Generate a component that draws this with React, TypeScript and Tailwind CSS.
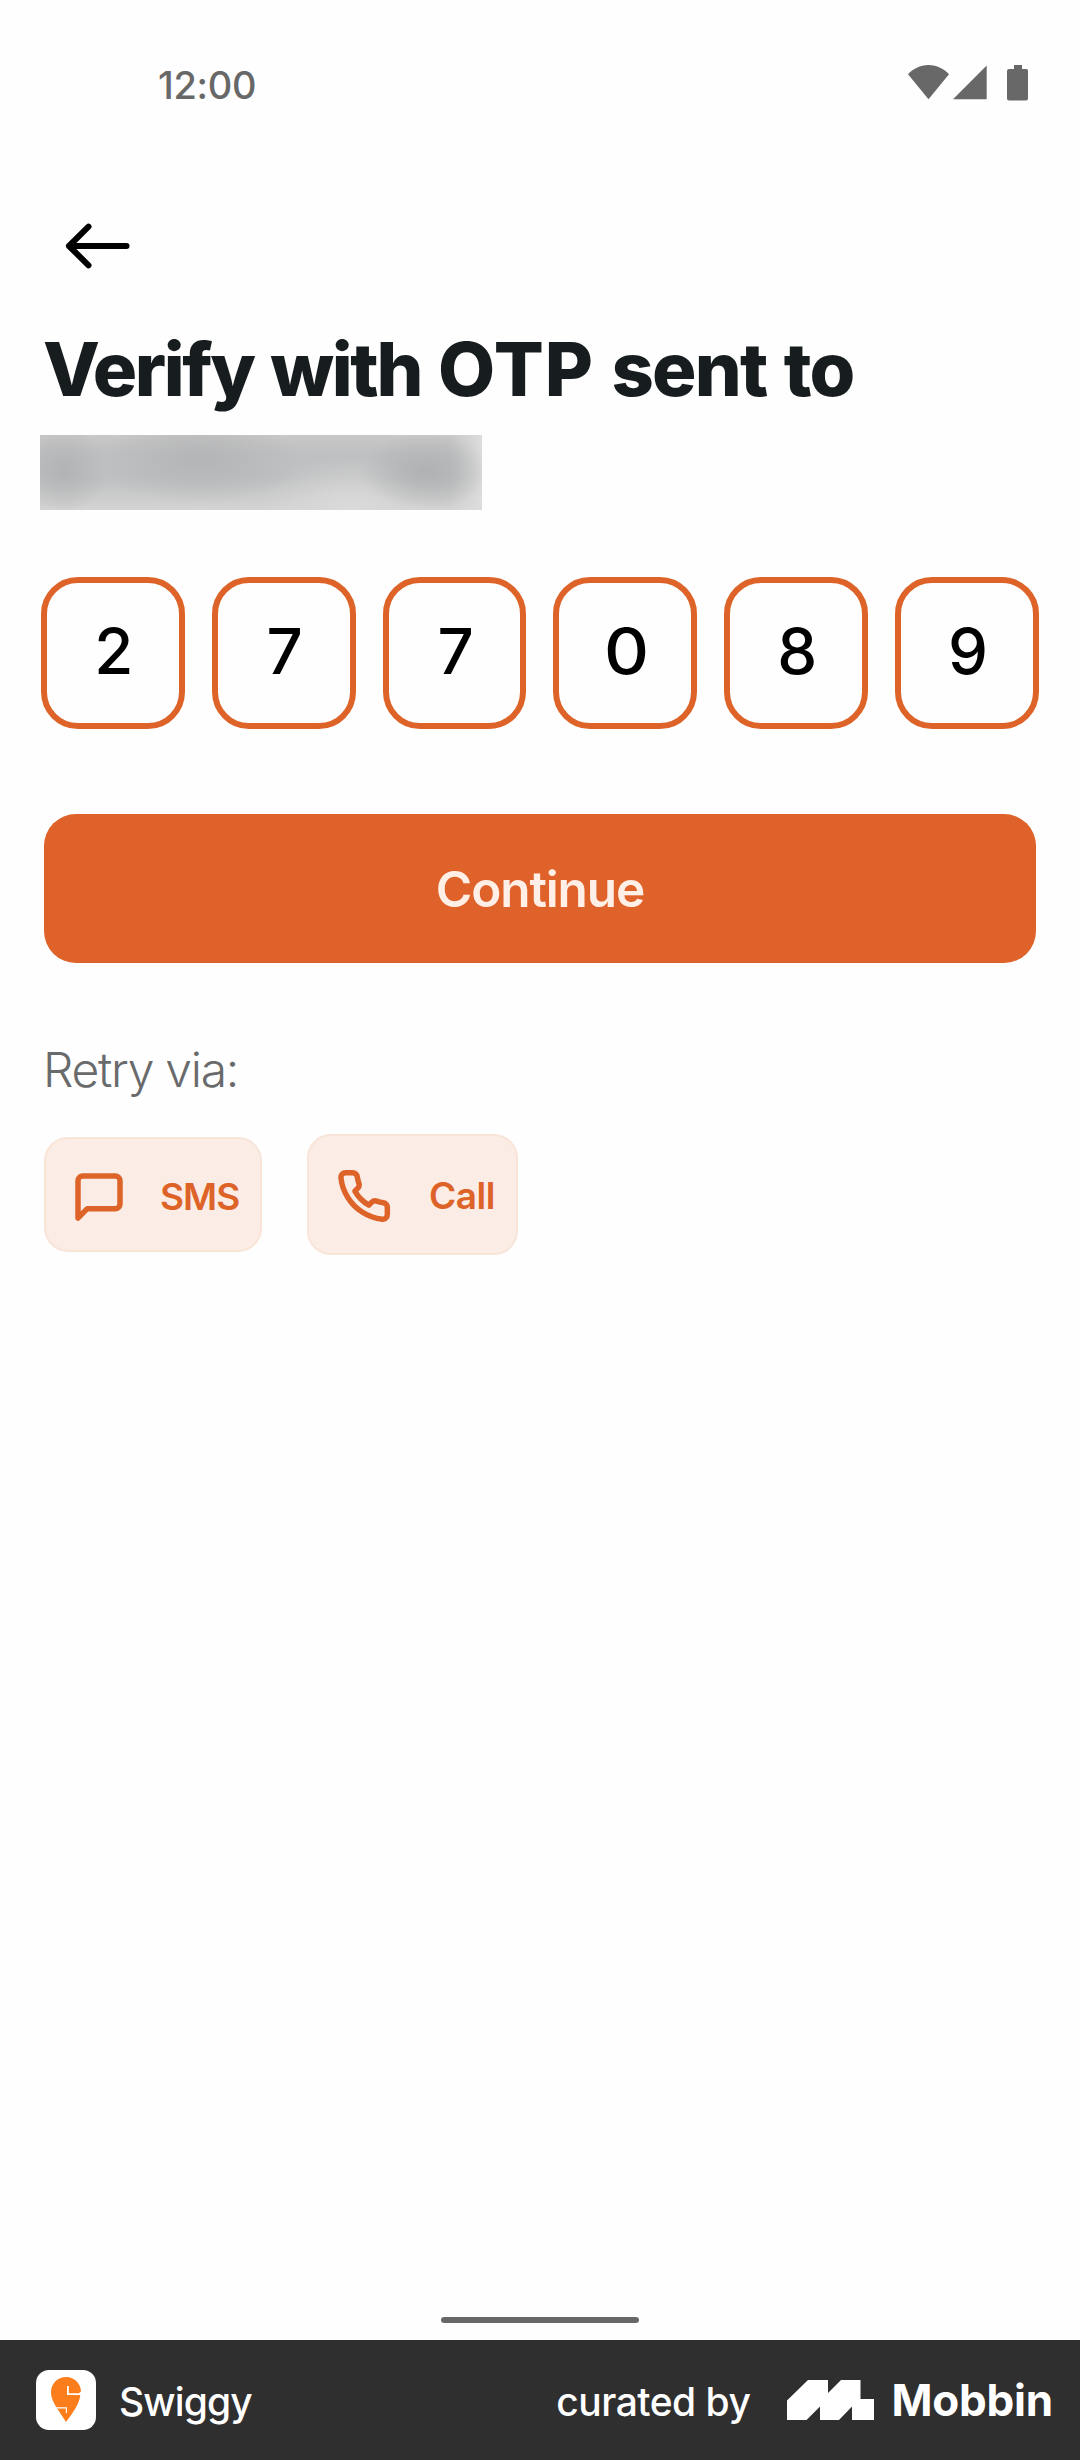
import React from "react";

const digits = ["2", "7", "7", "0", "8", "9"];

function StatusIcons() {
  return (
    <svg className="mb-[3px] h-[36px] w-[121px]" viewBox="908 65 121 36" fill="#686868">
      <path d="M908 74.2C913 69 920 65 928.5 65S944 69 949 74.2L928.5 99.3Z" />
      <path d="M953 99.3L986.7 65.4V99.3Z" />
      <path d="M1014 65H1022V69H1026.500a1.500 1.500 0 0 1 1.500 1.500V98.500a2 2 0 0 1-2 2H1009a2 2 0 0 1-2-2V71a2 2 0 0 1 2-2H1014Z" />
    </svg>
  );
}

function BackArrow() {
  return (
    <svg
      className="h-[48px] w-[68px]"
      viewBox="0 0 68 48"
      fill="none"
      stroke="#000"
      strokeWidth="6"
      strokeLinecap="round"
      strokeLinejoin="round"
    >
      <path d="M62.500 24H5M24.500 4.700L5 24L24.500 43.300" />
    </svg>
  );
}

function LineIcon({ d }: { d: string }) {
  return (
    <svg
      className="size-[56px] shrink-0"
      viewBox="0 0 24 24"
      fill="none"
      stroke="#dd6329"
      strokeWidth="2.35"
      strokeLinecap="round"
      strokeLinejoin="round"
    >
      <path d={d} />
    </svg>
  );
}

function SwiggyTile() {
  return (
    <svg className="size-[60px]" viewBox="0 0 60 60">
      <rect width="60" height="60" rx="13" fill="#fff" />
      <path
        fill="#fc7d1c"
        d="M30 7C21.500 7 15 13.700 15 22.300C15 28.500 18 33 20.500 37.300H31V43H29.800V38.500H21.200L30 52C36 44 43.500 34 44.300 25H31V16H32.800V23.300H43L45 21.500C44.800 13.500 38.500 7 30 7Z"
      />
    </svg>
  );
}

function MobbinMark() {
  return (
    <svg className="ml-[37px] h-[40px] w-[87px] shrink-0" viewBox="0 0 87 40" fill="#fff">
      <path d="M0 20.500L21 0H41V13L54 0H73.500V19H87V40H65V26.500L52 40H33V26.500L19.500 40H0Z" />
    </svg>
  );
}

export default function App() {
  return (
    <div className="flex h-[2460px] w-[1080px] flex-col overflow-hidden bg-[#fefefe] font-['Inter',sans-serif]">
      <header className="flex h-[169px] shrink-0 items-center justify-between pr-[51px] pl-[158px]">
        <span className="text-[38px] leading-[48px] font-medium tracking-[-0.3px] text-[#686868]">12:00</span>
        <StatusIcons />
      </header>

      <main className="flex flex-1 flex-col items-start px-[44px]">
        <div className="flex h-[154px] items-center pl-[20px]">
          <BackArrow />
        </div>
        <h1 className="-ml-px text-[74px] leading-[92px] font-extrabold tracking-[-2.400px] [word-spacing:3px] whitespace-nowrap text-[#171c1e]">
          Verify with <span className="tracking-[1px]">OTP</span>
          <span className="tracking-[-1.800px]"> sent to</span>
        </h1>

        <div className="mt-[20px] -ml-[4px] h-[75px] w-[442px] overflow-hidden bg-[#bfc0c1]">
          <div className="h-full w-full bg-[radial-gradient(ellipse_45px_42px_at_24px_35px,#b2b3b4,transparent),radial-gradient(ellipse_100px_45px_at_160px_25px,#b4b5b6,transparent),radial-gradient(ellipse_65px_38px_at_386px_36px,#b0b1b2,transparent),radial-gradient(ellipse_90px_50px_at_310px_72px,#dadada,transparent),linear-gradient(to_left,#dddddd,transparent_32px),linear-gradient(to_top,#d4d4d4,transparent_32px),linear-gradient(to_bottom,#c8c8c8,transparent_18px)]" />
        </div>

        <div className="mt-[67px] -ml-[3px] flex w-[998px] gap-[27px]">
          {digits.map((digit, i) => (
            <div
              key={i}
              className="flex h-[152px] flex-1 items-center justify-center rounded-[37px] border-[6px] border-[#dd6329] pb-[4px] pl-[2px] text-[63.500px] leading-[76px] font-medium text-black"
            >
              <span className={digit === "0" ? "scale-x-110" : ""}>{digit}</span>
            </div>
          ))}
        </div>

        <button className="mt-[85px] flex h-[149px] w-[992px] items-center justify-center rounded-[32px] bg-[#de6229] text-[49.500px] leading-[60px] font-semibold tracking-[-1.100px] text-[#ffefe6]">
          Continue
        </button>

        <p className="mt-[79px] -ml-px text-[48px] leading-[56px] font-[350] tracking-[-1.300px] text-[#686a6b]">
          Retry via:
        </p>

        <div className="mt-[36px] flex items-center gap-[45px] text-[37px] leading-[44px] font-semibold text-[#dd6329]">
          <button className="flex h-[115px] w-[218px] items-center rounded-[24px] border-2 border-[#f9e4d8] bg-[#fbede6] pt-[4px] pl-[25px] tracking-[-1px]">
            <LineIcon d="M21 15a2 2 0 0 1-2 2H7l-4 4V5a2 2 0 0 1 2-2h14a2 2 0 0 1 2 2z" />
            <span className="ml-[33px]">SMS</span>
          </button>
          <button className="flex h-[121px] w-[211px] items-center rounded-[24px] border-2 border-[#f9e4d8] bg-[#fbede6] pt-[3px] pl-[27px] tracking-[-0.5px]">
            <LineIcon d="M22 16.920v3a2 2 0 0 1-2.180 2 19.790 19.790 0 0 1-8.630-3.070 19.500 19.500 0 0 1-6-6 19.790 19.790 0 0 1-3.070-8.670A2 2 0 0 1 4.110 2h3a2 2 0 0 1 2 1.720 12.840 12.840 0 0 0 .7 2.810 2 2 0 0 1-.45 2.110L8.090 9.910a16 16 0 0 0 6 6l1.270-1.270a2 2 0 0 1 2.110-.45 12.840 12.840 0 0 0 2.810.7A2 2 0 0 1 22 16.920z" />
            <span className="ml-[37px]">Call</span>
          </button>
        </div>
      </main>

      <div className="mx-auto mb-[17px] h-[6px] w-[198px] shrink-0 rounded-full bg-[#686868]" />

      <footer className="flex h-[120px] shrink-0 items-center bg-[#2f2f2f] pr-[27px] pl-[36px] text-white">
        <SwiggyTile />
        <span className="ml-[23px] pt-[3px] text-[39px] leading-[48px] font-medium tracking-[-0.900px]">Swiggy</span>
        <div className="ml-auto flex items-center">
          <span className="pt-[3px] text-[39px] leading-[48px] font-medium tracking-[-0.5px]">curated by</span>
          <MobbinMark />
          <span className="ml-[17px] text-[44px] leading-[52px] font-bold tracking-[-0.2px]">Mobbin</span>
        </div>
      </footer>
    </div>
  );
}
